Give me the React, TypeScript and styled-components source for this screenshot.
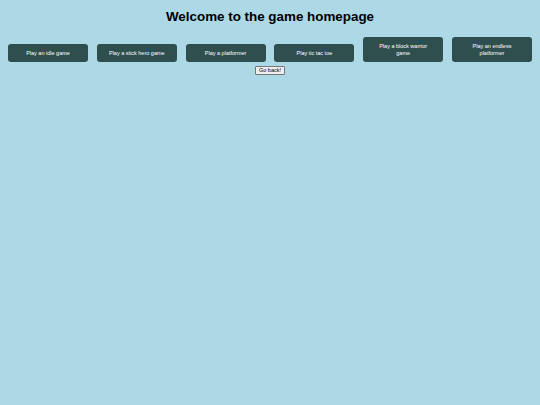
import React from 'react';
import styled, {createGlobalStyle} from "styled-components";

const games = [
  "Play an idle game",
  "Play a stick hero game",
  "Play a platformer",
  "Play tic tac toe",
  "Play a block warrior game",
  "Play an endless platformer",
];

const App = () => {
  return (
    <>
      <GlobalStyle />
      <Page>
        <Title>Welcome to the game homepage</Title>
        <GameRow>
          {games.map((name) => (
            <GameButton key={name}>{name}</GameButton>
          ))}
        </GameRow>
        <BackRow>
          <BackButton>Go back!</BackButton>
        </BackRow>
      </Page>
    </>
  );
};

const GlobalStyle = createGlobalStyle`
  html, body {
    margin: 0;
    padding: 0;
    background: #add8e6;
    font-family: "Liberation Sans", Arial, sans-serif;
  }
`;

const Page = styled.div`
  min-height: 405px;
  padding: 0 8px;
  box-sizing: border-box;
  background: #add8e6;
`;

const Title = styled.h1`
  margin: 0;
  padding-top: 9px;
  font-size: 13.4px;
  line-height: 16px;
  font-weight: bold;
  text-align: center;
  color: #000;
`;

const GameRow = styled.div`
  display: flex;
  justify-content: space-between;
  align-items: flex-end;
  margin-top: 12px;
`;

const GameButton = styled.button`
  width: 80px;
  box-sizing: border-box;
  background: #2f4f4f;
  color: #fff;
  border: none;
  border-radius: 3px;
  padding: 5.5px 9px;
  font-family: "Liberation Sans", Arial, sans-serif;
  font-size: 5.5px;
  line-height: 7px;
  cursor: pointer;
`;

const BackRow = styled.div`
  display: flex;
  justify-content: center;
  margin-top: 3.5px;
`;

const BackButton = styled.button`
  width: 30px;
  height: 9px;
  padding: 0;
  box-sizing: border-box;
  background: #efefef;
  border: 1px solid #767676;
  border-radius: 1px;
  font-family: "Liberation Sans", Arial, sans-serif;
  font-size: 5.5px;
  line-height: 7px;
  color: #000;
`;

export default App;
